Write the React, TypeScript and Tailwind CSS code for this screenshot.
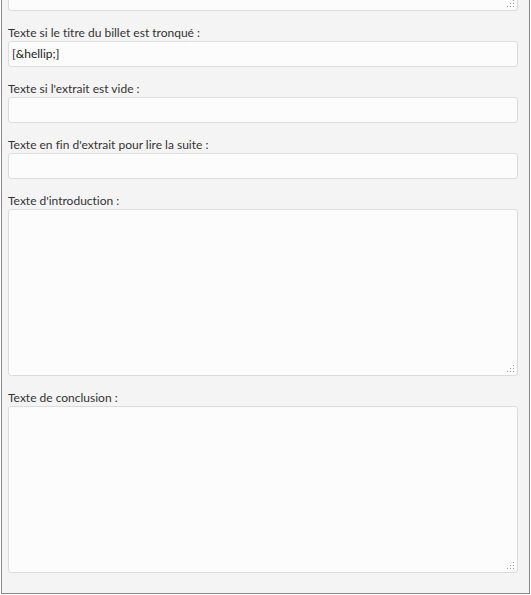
import React from "react";

const font = { fontFamily: 'Lato, "Noto Sans", sans-serif' };

function Grip() {
  return (
    <svg className="absolute bottom-[2px] right-[2px]" width="9" height="9" viewBox="0 0 9 9">
      <rect x="7" y="1" width="1" height="1" fill="#999" />
      <rect x="4" y="4" width="1" height="1" fill="#999" />
      <rect x="7" y="4" width="1" height="1" fill="#999" />
      <rect x="1" y="7" width="1" height="1" fill="#999" />
      <rect x="4" y="7" width="1" height="1" fill="#999" />
      <rect x="7" y="7" width="1" height="1" fill="#999" />
    </svg>
  );
}

function Field({ label, value }: { label: string; value?: string }) {
  return (
    <div className="mt-[14px]">
      <div className="h-[16px] text-[12px] leading-[16px] text-[#333]">{label}</div>
      <div className="h-[26px] rounded-[3px] border border-[#dcdcdc] bg-[#fcfcfc] px-[3px] text-[12px] leading-[24px] text-[#222]">
        {value}
      </div>
    </div>
  );
}

function Area({ label }: { label: string }) {
  return (
    <div className="mt-[14px]">
      <div className="h-[16px] text-[12px] leading-[16px] text-[#333]">{label}</div>
      <div className="relative h-[167px] rounded-[3px] border border-[#dcdcdc] bg-[#fcfcfc]">
        <Grip />
      </div>
    </div>
  );
}

export default function App() {
  return (
    <div className="h-[595px] w-[531px] bg-white [font-variant-ligatures:none]" style={font}>
      <div className="ml-[1px] h-[594px] w-[529px] overflow-hidden border-x border-b border-[#8c8c8c] bg-[#f4f4f4] pl-[6px] pr-[11px]">
        <div className="relative h-[11px] rounded-b-[3px] border-x border-b border-[#dcdcdc] bg-[#fcfcfc]">
          <Grip />
        </div>
        <Field label="Texte si le titre du billet est tronqué :" value={"[&hellip;]"} />
        <Field label="Texte si l'extrait est vide :" />
        <Field label="Texte en fin d'extrait pour lire la suite :" />
        <Area label="Texte d'introduction :" />
        <Area label="Texte de conclusion :" />
      </div>
    </div>
  );
}
